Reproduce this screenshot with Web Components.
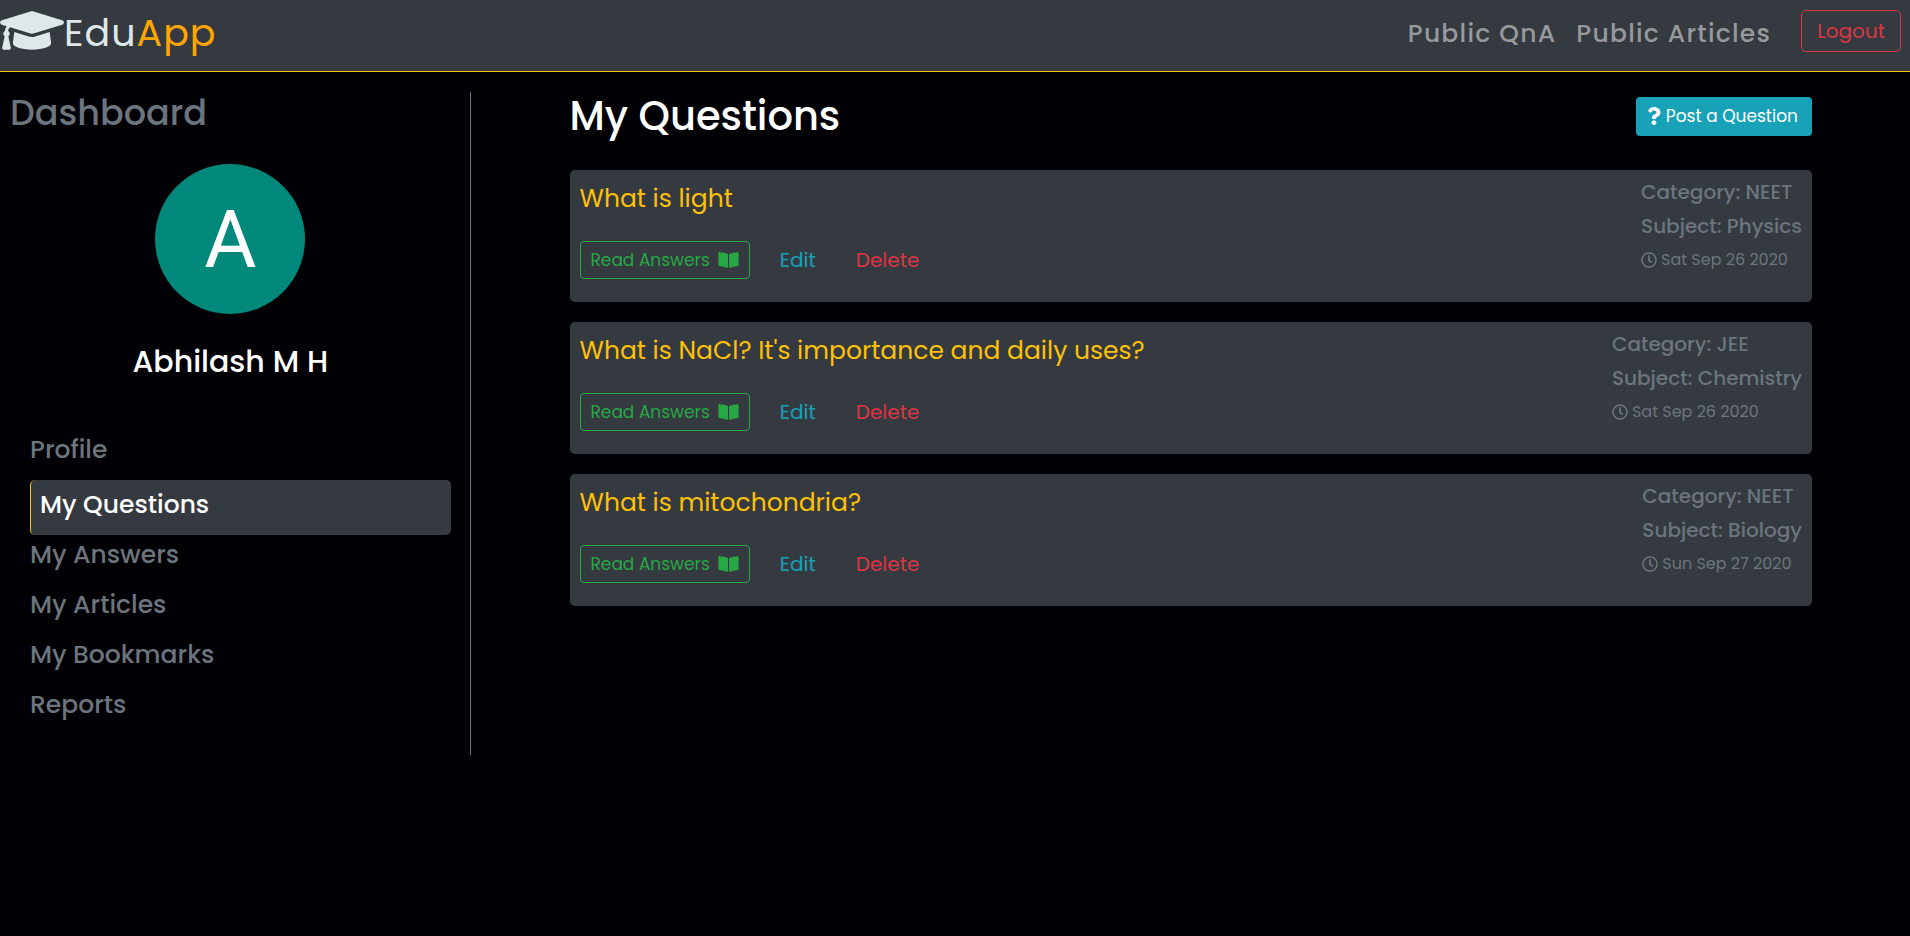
<!DOCTYPE html>
<html lang="en">
<head>
<meta charset="utf-8">
<meta name="viewport" content="width=device-width, initial-scale=1">
<title>EduApp - My Questions</title>
<style>
  :root {
    --bg: #000005;
    --panel: #343a40;
    --muted: #6c757d;
    --warning: #ffc107;
    --info: #17a2b8;
    --success: #28a745;
    --danger: #dc3545;
  }
  body {
    margin: 0;
    background: var(--bg);
    color: #fff;
    font-family: Poppins, Inter, "Open Sans", sans-serif;
  }
</style>
</head>
<body>
<edu-app>
  <edu-header slot="header">
    <header-link href="#qna">Public QnA</header-link>
    <header-link href="#articles">Public Articles</header-link>
  </edu-header>
  <edu-sidebar slot="sidebar" name="Abhilash M H" initial="A">
    <side-link href="#profile">Profile</side-link>
    <side-link href="#questions" active>My Questions</side-link>
    <side-link href="#answers">My Answers</side-link>
    <side-link href="#my-articles">My Articles</side-link>
    <side-link href="#bookmarks">My Bookmarks</side-link>
    <side-link href="#reports">Reports</side-link>
  </edu-sidebar>
  <question-list>
    <question-card category="NEET" subject="Physics" date="Sat Sep 26 2020">What is light</question-card>
    <question-card category="JEE" subject="Chemistry" date="Sat Sep 26 2020">What is NaCl? It's importance and daily uses?</question-card>
    <question-card category="NEET" subject="Biology" date="Sun Sep 27 2020">What is mitochondria?</question-card>
  </question-list>
</edu-app>

<script>
const ICONS = {
  cap: ['0 0 640 512', 'M622.34 153.2L343.4 67.5c-15.2-4.67-31.6-4.67-46.79 0L17.66 153.2c-23.54 7.23-23.54 38.36 0 45.59l48.63 14.94c-10.67 13.19-17.23 29.28-17.88 46.9C38.78 266.15 32 276.11 32 288c0 10.78 5.68 19.85 13.86 25.65L20.33 428.53C18.11 438.52 25.71 448 35.94 448h56.11c10.24 0 17.84-9.48 15.62-19.47L82.14 313.65C90.32 307.85 96 298.78 96 288c0-11.57-6.47-21.25-15.66-26.87.76-15.02 8.44-28.3 20.69-36.72L296.6 284.5c9.06 2.78 26.44 6.25 46.79 0l278.95-85.7c23.55-7.24 23.55-38.36 0-45.6zM352.79 315.09c-28.53 8.76-52.84 3.92-65.59 0l-145.02-44.55L128 384c0 35.35 85.96 64 192 64s192-28.65 192-64l-14.18-113.47-145.03 44.56z'],
  book: ['0 0 576 512', 'M542.22 32.05c-54.8 3.11-163.72 14.43-230.96 55.59-4.64 2.84-7.27 7.89-7.27 13.17v363.87c0 11.55 12.63 18.85 23.28 13.49 69.18-34.82 169.23-44.32 218.7-46.92 16.89-.89 30.02-14.43 30.02-30.66V62.75c.01-17.71-15.35-31.74-33.77-30.7zM264.73 87.64C197.5 46.48 88.58 35.17 33.78 32.05 15.36 31.01 0 45.04 0 62.75V400.6c0 16.24 13.13 29.78 30.02 30.66 49.49 2.6 149.59 12.11 218.77 46.95 10.62 5.35 23.21-1.94 23.21-13.46V100.63c0-5.29-2.62-10.14-7.27-12.99z'],
  question: ['0 0 384 512', 'M202.021 0C122.202 0 70.503 32.703 29.914 91.026c-7.363 10.58-5.093 25.086 5.178 32.874l43.138 32.709c10.373 7.865 25.132 6.026 33.253-4.148 25.049-31.381 43.63-49.449 82.757-49.449 30.764 0 68.816 19.799 68.816 49.631 0 22.552-18.617 34.134-48.993 51.164-35.423 19.86-82.299 44.576-82.299 106.405V320c0 13.255 10.745 24 24 24h72.471c13.255 0 24-10.745 24-24v-5.773c0-42.86 125.268-44.645 125.268-160.627C377.504 66.256 286.902 0 202.021 0zM192 373.459c-38.196 0-69.271 31.075-69.271 69.271 0 38.195 31.075 69.27 69.271 69.27s69.271-31.075 69.271-69.271-31.075-69.27-69.271-69.27z'],
  clock: ['0 0 512 512', 'M256 8C119 8 8 119 8 256s111 248 248 248 248-111 248-248S393 8 256 8zm0 448c-110.5 0-200-89.5-200-200S145.5 56 256 56s200 89.5 200 200-89.5 200-200 200zm61.8-104.4l-84.9-61.7c-3.1-2.3-4.9-5.9-4.9-9.7V116c0-6.6 5.4-12 12-12h32c6.6 0 12 5.4 12 12v141.7l66.8 48.6c5.4 3.9 6.5 11.4 2.6 16.8L334.6 349c-3.9 5.3-11.4 6.5-16.8 2.6z']
};

class EduElement extends HTMLElement {
  connectedCallback() {
    if (this.shadowRoot) return;
    this.attachShadow({ mode: 'open' }).innerHTML =
      `<style>*{box-sizing:border-box}h1,h2,h3,p,ul{margin:0}${this.styles()}</style>${this.markup()}`;
  }
}

customElements.define('edu-icon', class extends EduElement {
  styles() { return `:host{display:block;flex:none} svg{display:block;width:100%;height:100%;fill:currentColor}`; }
  markup() {
    const [box, path] = ICONS[this.getAttribute('name')];
    return `<svg viewBox="${box}" aria-hidden="true"><path d="${path}"/></svg>`;
  }
});

customElements.define('edu-app', class extends EduElement {
  styles() { return `
    :host{display:block}
    .columns{display:flex;align-items:flex-start;padding-top:20px}
    aside{flex:0 0 25%;min-width:0}
    main{flex:1;min-width:0;padding:0 98px 40px 92px}`; }
  markup() { return `<slot name="header"></slot>
    <div class="columns"><aside><slot name="sidebar"></slot></aside><main><slot></slot></main></div>`; }
});

customElements.define('edu-header', class extends EduElement {
  styles() { return `
    :host{display:block}
    header{display:flex;justify-content:space-between;align-items:flex-start;background:var(--panel);border-bottom:1px solid var(--warning);padding:0 9px 3px 0}
    .brand{display:flex;align-items:center;height:66px;color:#dfe8e8;text-decoration:none;font-size:38px;line-height:60px;letter-spacing:1px}
    .brand edu-icon{width:64px;height:51px;margin-bottom:6px}
    .brand b{font-weight:400;color:orange}
    nav{display:flex;align-items:center;gap:20px;height:68px}
    button{align-self:flex-start;margin:10px 0 0 10px;height:42px;padding:0 15px;font:inherit;font-size:20px;color:var(--danger);background:none;border:1px solid var(--danger);border-radius:5px;cursor:pointer}`; }
  markup() { return `<header>
    <a class="brand" href="#home"><edu-icon name="cap"></edu-icon><span>Edu<b>App</b></span></a>
    <nav><slot></slot><button type="button">Logout</button></nav></header>`; }
});

customElements.define('header-link', class extends EduElement {
  styles() { return `:host{display:block} a{color:#97999c;text-decoration:none;font-size:25px;line-height:40px;font-weight:500;letter-spacing:0.05em;white-space:nowrap}`; }
  markup() { return `<a href="${this.getAttribute('href')}"><slot></slot></a>`; }
});

customElements.define('edu-sidebar', class extends EduElement {
  styles() { return `
    :host{display:block;margin-right:7px;border-right:1px solid var(--muted);padding:0 19px 20px 10px}
    h2{color:var(--muted);font-size:35px;line-height:42px;font-weight:500}
    .user{display:flex;flex-direction:column;align-items:center;gap:28px;padding-top:30px}
    .avatar{width:150px;height:150px;padding-top:2px;border-radius:50%;background:#00897b;display:flex;align-items:center;justify-content:center;font:400 80px/148px Roboto,sans-serif}
    .name{font-size:30px;line-height:40px;font-weight:500}
    nav{padding:48px 0 0 20px}`; }
  markup() { return `<h2>Dashboard</h2>
    <div class="user"><div class="avatar">${this.getAttribute('initial')}</div><p class="name">${this.getAttribute('name')}</p></div>
    <nav aria-label="Dashboard"><slot></slot></nav>`; }
});

customElements.define('side-link', class extends EduElement {
  styles() { return `
    :host{display:block}
    a{display:block;padding:1px 0 11px;color:var(--muted);text-decoration:none;font-size:25px;line-height:38px;font-weight:500}
    :host([active]) a{padding:6px 10px 11px 9px;color:#fff;background:var(--panel);border-left:1px solid var(--warning);border-radius:5px}`; }
  markup() { return `<a href="${this.getAttribute('href')}"${this.hasAttribute('active') ? ' aria-current="page"' : ''}><slot></slot></a>`; }
});

customElements.define('question-list', class extends EduElement {
  styles() { return `
    :host{display:block}
    .top{display:flex;justify-content:space-between;align-items:center;height:48px;margin-bottom:30px}
    h1{font-size:40px;line-height:48px;font-weight:500}
    .post{display:flex;align-items:center;gap:5px;height:39px;padding:0 14px 0 11px;border-radius:4px;background:var(--info);color:#fff;text-decoration:none;font-size:17px;white-space:nowrap}
    .post edu-icon{width:14px;height:18px}
    .list{display:grid;gap:20px}`; }
  markup() { return `<div class="top"><h1>My Questions</h1>
    <a class="post" href="#post"><edu-icon name="question"></edu-icon>Post a Question</a></div>
    <div class="list"><slot></slot></div>`; }
});

customElements.define('question-card', class extends EduElement {
  styles() { return `
    :host{display:block}
    article{display:flex;justify-content:space-between;background:var(--panel);border-radius:5px;padding:0 10px}
    .body{padding:11px 0 23px}
    h3{color:var(--warning);font-size:25px;line-height:36px;font-weight:400;margin-bottom:24px}
    .actions{display:flex;align-items:center;gap:30px}
    button{font:inherit;font-size:20px;padding:0;background:none;border:0;cursor:pointer}
    .read{display:flex;align-items:center;gap:8px;height:38px;padding:0 10px;font-size:17px;color:var(--success);border:1px solid var(--success);border-radius:4px}
    .read edu-icon{width:21px;height:18px}
    .edit{color:var(--info)}
    .delete{color:var(--danger);margin-left:10px}
    .meta{padding-top:5px;color:var(--muted);font-size:20px;line-height:34px;font-weight:500;white-space:nowrap}
    .date{display:flex;align-items:center;gap:4px;font-size:16px;line-height:34px;font-weight:400}
    .date edu-icon{width:16px;height:16px}`; }
  markup() {
    const a = n => this.getAttribute(n);
    return `<article><div class="body"><h3><slot></slot></h3>
      <div class="actions"><button type="button" class="read">Read Answers<edu-icon name="book"></edu-icon></button>
      <button type="button" class="edit">Edit</button><button type="button" class="delete">Delete</button></div></div>
      <div class="meta"><p>Category: ${a('category')}</p><p>Subject: ${a('subject')}</p>
      <p class="date"><edu-icon name="clock"></edu-icon><time>${a('date')}</time></p></div></article>`;
  }
});
</script>
</body>
</html>
